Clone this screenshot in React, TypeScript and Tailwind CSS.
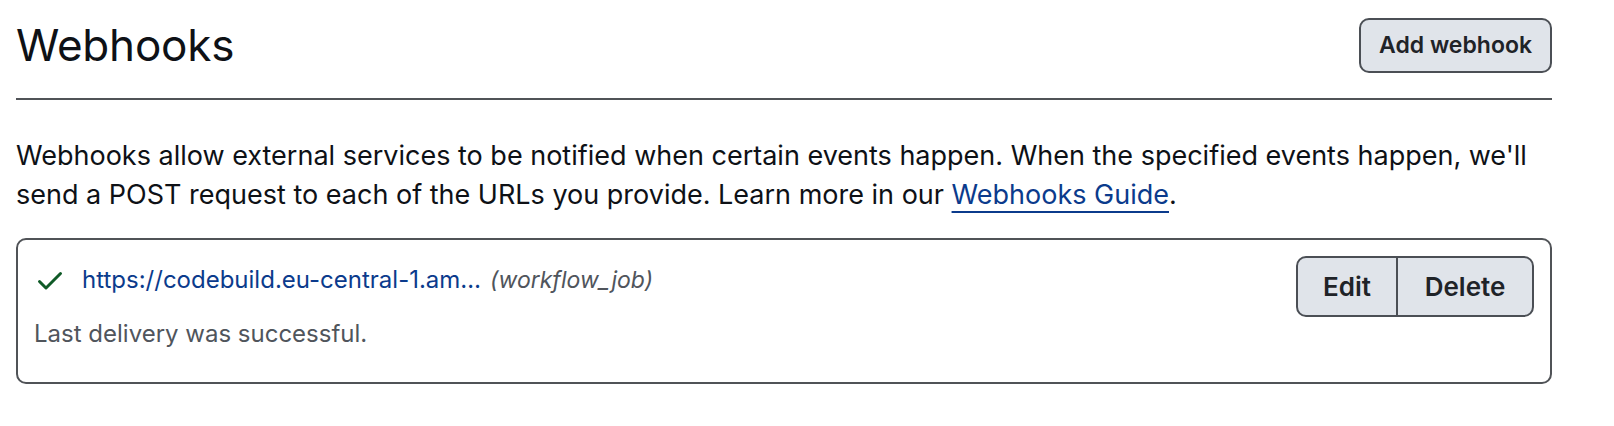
import React from "react";

function CheckIcon() {
  return (
    <svg width="32" height="32" viewBox="0 0 16 16" fill="#0f5a27" aria-hidden="true">
      <path d="M13.78 4.22a.75.75 0 0 1 0 1.06l-7.25 7.25a.75.75 0 0 1-1.06 0L2.22 9.28a.751.751 0 0 1 .018-1.042.751.751 0 0 1 1.042-.018L6 10.94l6.72-6.72a.75.75 0 0 1 1.06 0Z" />
    </svg>
  );
}

export default function App() {
  return (
    <div className="min-h-[426px] w-full bg-white font-['Inter','Liberation_Sans',sans-serif] text-[#0e1116]">
      <div className="ml-4 w-[1536px]">
        {/* Header */}
        <div className="flex items-center justify-between border-b-2 border-[#505357] pt-[18px] pb-[25px]">
          <h2 className="text-[44px] leading-[55px] font-normal tracking-[-0.2px]">Webhooks</h2>
          <button className="h-[55px] w-[193px] rounded-[10px] border-2 border-[#4b4f55] bg-[#e0e4ea] text-[23px] font-semibold text-[#1f2328]">
            Add webhook
          </button>
        </div>

        {/* Description */}
        <p className="mt-[36px] text-[27px] leading-[39px]">
          Webhooks allow external services to be notified when certain events happen. When the specified events happen, we'll
          <br />
          send a POST request to each of the URLs you provide. Learn more in our{" "}
          <a href="#" className="text-[#0b3b8c] underline decoration-2 underline-offset-[7px]">
            Webhooks Guide
          </a>
          .
        </p>

        {/* Webhook card */}
        <div className="mt-[24px] flex h-[146px] items-start justify-between rounded-[10px] border-2 border-[#505357] p-4">
          <div className="mt-[8px]">
            <div className="flex h-[32px] items-center text-[24px] leading-[32px]">
              <CheckIcon />
              <a href="#" className="ml-4 text-[#0b3b8c]">
                https://codebuild.eu-central-1.am…
              </a>
              <span className="ml-[9px] text-[23px] italic text-[#50555c]">(workflow_job)</span>
            </div>
            <div className="mt-[22px] text-[24px] leading-[32px] text-[#50555c]">Last delivery was successful.</div>
          </div>
          <div className="flex h-[61px] overflow-hidden rounded-[10px] border-2 border-[#4b4f55] bg-[#e0e4ea] text-[26px] font-semibold text-[#1f2328]">
            <button className="w-[100px] border-r-2 border-[#4b4f55]">Edit</button>
            <button className="w-[134px]">Delete</button>
          </div>
        </div>
      </div>
    </div>
  );
}
